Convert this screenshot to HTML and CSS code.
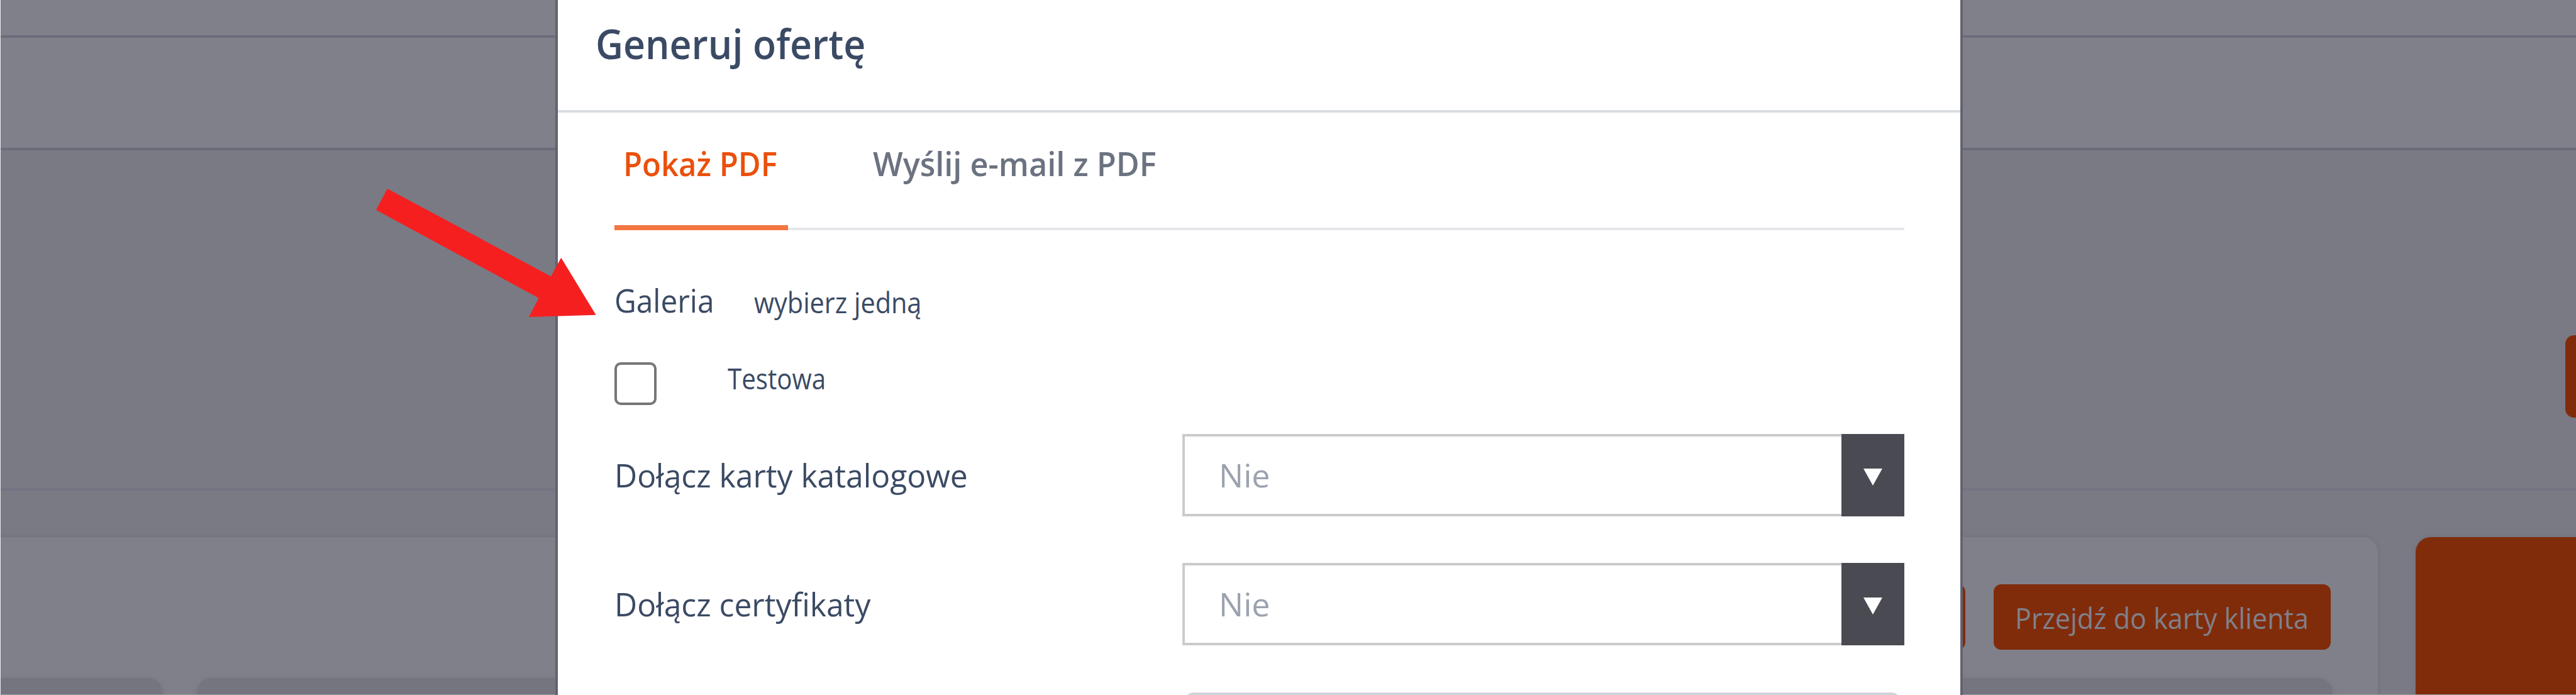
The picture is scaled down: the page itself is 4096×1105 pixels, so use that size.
FILE: index.html
```html
<!DOCTYPE html>
<html lang="pl">
<head>
<meta charset="UTF-8">
<title>Generuj ofertę</title>
<link rel="stylesheet" href="styles.css">
</head>
<body>
<div class="page">
  <div class="topbar"></div>
  <div class="navbar"></div>
  <div class="toolbar"><div class="toolbar-btn"></div></div>
  <div class="content">
    <div class="card">
      <div class="actions">
        <div class="btn btn-empty"></div>
        <div class="btn"><span class="btn-text">Przejdź do karty klienta</span></div>
      </div>
      <div class="tiles">
        <div class="tile tile-first"></div>
        <div class="tile tile-wide"></div>
      </div>
    </div>
    <div class="side"></div>
  </div>
</div>

<div class="modal">
  <div class="modal-head"><h1 class="title">Generuj ofertę</h1></div>
  <div class="modal-body">
    <div class="tabs">
      <div class="tab active"><span class="tab-pdf">Pokaż PDF</span></div>
      <div class="tab"><span class="tab-mail">Wyślij e-mail z PDF</span></div>
    </div>
    <div class="gallery">
      <span class="label lbl-gal">Galeria</span>
      <span class="small lbl-one">wybierz jedną</span>
    </div>
    <div class="option">
      <span class="check"></span>
      <span class="small lbl-test">Testowa</span>
    </div>
    <div class="row">
      <span class="label">Dołącz karty katalogowe</span>
      <div class="select"><span class="value">Nie</span><span class="arrow"><svg width="30" height="27" viewBox="0 0 30 27"><path d="M0 0h30L15 27z" fill="#fff"/></svg></span></div>
    </div>
    <div class="row">
      <span class="label">Dołącz certyfikaty</span>
      <div class="select"><span class="value">Nie</span><span class="arrow"><svg width="30" height="27" viewBox="0 0 30 27"><path d="M0 0h30L15 27z" fill="#fff"/></svg></span></div>
    </div>
    <div class="row"><div class="input"></div></div>
  </div>
</div>

<svg class="pointer" width="350" height="205" viewBox="0 0 350 205">
  <path d="M17.9 0L278 139.4L294.2 109.8L349.6 200.8L242.9 204.1L258.7 173.9L0 33.8z" fill="#f51f1f"/>
</svg>
</body>
</html>
```
FILE: styles.css
```css
*{box-sizing:border-box;}
body{margin:0;width:4096px;height:1105px;overflow:hidden;position:relative;
     font-family:"Open Sans","Noto Sans",sans-serif;background:#7a7a84;}
span{white-space:nowrap;}

/* ----- page behind the dialog ----- */
.page{height:1105px;overflow:hidden;border-left:1px solid #e9e9eb;border-bottom:1px solid #9d9da6;}
.topbar{height:60px;background:#80808a;border-bottom:4px solid #6b6b7a;}
.navbar{height:179px;background:#80808a;border-bottom:4px solid #6a6c7b;}
.toolbar{height:541px;border-bottom:4px solid #737382;padding-top:294px;display:flex;justify-content:flex-end;}
.toolbar-btn{width:17px;height:131px;background:#802c0b;border-radius:14px 0 0 14px;}
.content{display:flex;gap:60px;padding-top:74px;height:330px;}
.card{width:3780px;background:#80808a;border-radius:0 24px 0 0;box-shadow:0 0 6px rgba(90,90,110,.35);
      display:flex;flex-direction:column;}
.side{flex:1;background:#802c0b;border-radius:24px 0 0 0;box-shadow:0 0 6px rgba(90,90,110,.35);}
.actions{display:flex;justify-content:flex-end;gap:45px;padding:75px 75px 0 0;}
.btn{width:536px;height:104px;background:#802c0b;border-radius:12px;color:#80808a;
     display:flex;align-items:center;padding:3px 0 0 34px;font-size:45px;line-height:60px;}
.btn-empty{width:400px;}
.tiles{display:flex;gap:54px;padding:45px 72px 0 0;flex:1;}
.tile{background:#757580;box-shadow:0 0 6px rgba(110,110,125,.5);}
.tile-first{width:258px;border-radius:0 24px 0 0;}
.tile-wide{flex:1;border-radius:24px 24px 0 0;}

/* ----- dialog ----- */
.modal{position:absolute;left:883px;top:0;width:2238px;height:1105px;background:#fff;
       border-left:4px solid #626271;border-right:4px solid #626271;overflow:hidden;color:#3b4a64;}
.modal-head{height:179px;border-bottom:4px solid #d8dce0;padding:23px 0 0 60px;}
.title{margin:0;font-size:66px;line-height:90px;font-weight:600;}
.modal-body{padding:0 89px 0 90px;}
.tabs{height:187px;border-bottom:4px solid #e5e7eb;display:flex;gap:118px;}
.tab{height:187px;padding:45px 16px 0 17px;font-size:52px;line-height:72px;font-weight:600;color:#6b7280;}
.tab.active{width:276px;padding-left:14px;color:#ea500c;border-bottom:8px solid #f47641;}
.label{font-size:52px;line-height:72px;}
.small{font-size:45px;line-height:60px;}
.gallery{height:209px;padding-top:75px;display:flex;}
.lbl-one{margin:10px 0 0 50px;}
.option{height:115px;display:flex;}
.lbl-test{margin:-3px 0 0 113px;}
.check{width:67px;height:68px;margin-top:1px;border:4px solid #767676;border-radius:10px;}
.row{height:205px;display:flex;justify-content:space-between;}
.row .label{margin-top:29px;}
.select{width:1148px;height:131px;border:4px solid #cbcbcb;border-right:0;display:flex;justify-content:space-between;
        font-size:52px;line-height:72px;color:#9ca3af;}
.value{padding:25px 0 0 54px;}
.arrow{width:100px;height:131px;margin-top:-4px;padding-top:6px;background:#4a4a53;
       display:flex;align-items:center;justify-content:center;}
.input{width:1138px;height:131px;margin:1px 6px 0 auto;border:4px solid #d1d5db;border-radius:14px;}

/* narrower letters */
.title,.label,.small,.tab span,.btn-text{display:inline-block;transform:scaleX(.958);transform-origin:0 0;}
.title{transform:scaleX(.92);}
.tab .tab-pdf{transform:scaleX(.942);}
.tab .tab-mail{transform:scaleX(.97);}
.lbl-gal,.lbl-one{transform:scaleX(.92);}
.lbl-test{transform:scaleX(.895);}

/* red pointer over the dialog edge */
.pointer{position:absolute;left:598px;top:300px;}
```
